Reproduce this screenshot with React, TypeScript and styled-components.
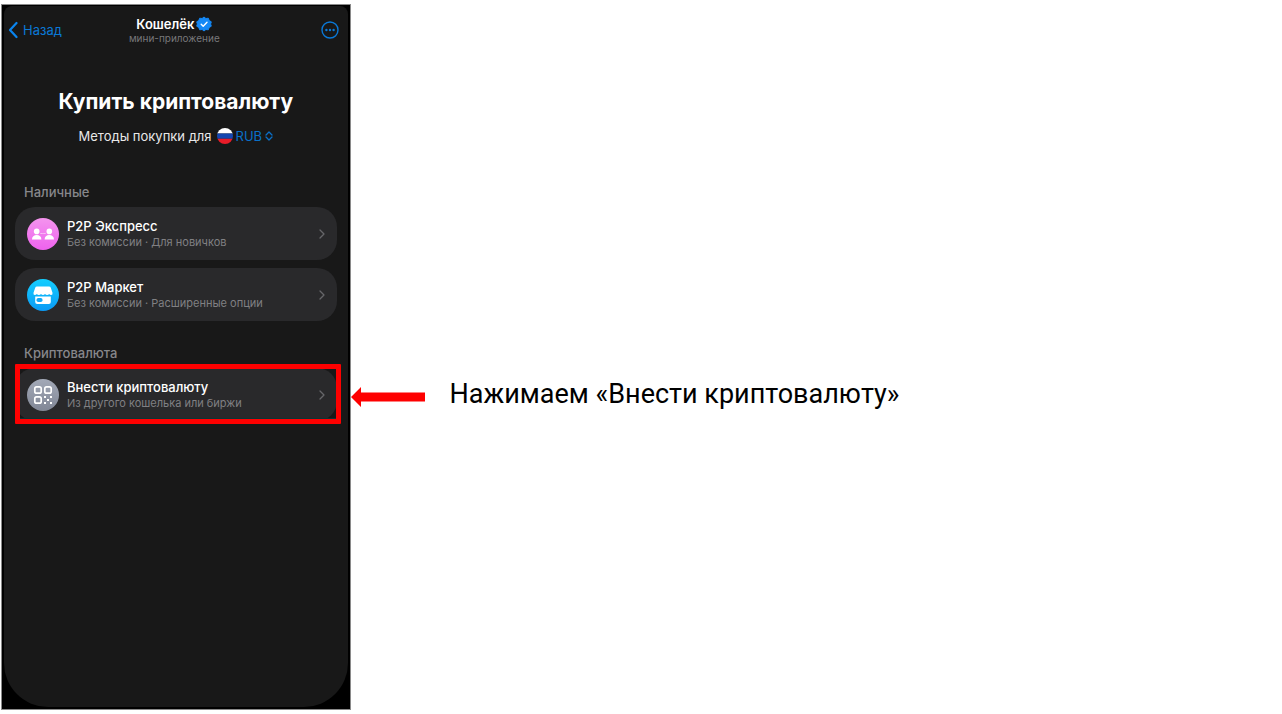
import React from 'react';
import styled, { createGlobalStyle } from 'styled-components';

const GlobalStyle = createGlobalStyle`
  *, *::before, *::after { box-sizing: border-box; }
  body { margin: 0; background: #fff; font-family: Inter, "Liberation Sans", sans-serif; }
  h1, h2, p { margin: 0; }
  button { font: inherit; border: 0; background: none; padding: 0; cursor: pointer; }
  svg { display: block; flex: none; }
`;

const Page = styled.main`
  display: flex;
  align-items: flex-start;
  gap: 1px;
  padding: 5px 2px;
`;

const Phone = styled.section`
  display: flex;
  flex: 0 0 27.2%;
  min-width: 340px;
  min-height: calc(100vh - 10px);
  padding: 1px 2px 2px;
  background: #000;
  outline: 1px solid #8a8a8a;
`;

const Screen = styled.div`
  flex: 1;
  padding: 0 11px;
  background: #181818;
  border-radius: 8px 8px 44px 44px;
`;

const Header = styled.header`
  display: grid;
  grid-template-columns: 1fr auto 1fr;
  align-items: center;
  height: 48px;
  margin: 0 -4px 0 -7px;
`;

const BackButton = styled.button`
  display: flex;
  align-items: center;
  gap: 5px;
  justify-self: start;
  color: #0a78d6;
  font-size: 13px;
  line-height: 16px;
`;

const MoreButton = styled.button`
  justify-self: end;
  margin-right: 2px;
  color: #0a78d6;
`;

const AppTitle = styled.div`
  text-align: center;
`;

const AppName = styled.p`
  display: flex;
  align-items: center;
  justify-content: center;
  gap: 2px;
  color: #fff;
  font-size: 13px;
  font-weight: 600;
  line-height: 16px;
`;

const AppKind = styled.p`
  color: #77777a;
  font-size: 10px;
  line-height: 12px;
`;

const Title = styled.h1`
  margin-top: 33px;
  color: #fff;
  font-size: 21px;
  font-weight: 700;
  line-height: 30px;
  text-align: center;
  white-space: nowrap;
`;

const Methods = styled.div`
  display: flex;
  align-items: center;
  justify-content: center;
  gap: 5px;
  margin-top: 11px;
  color: #e8e8e8;
  font-size: 13px;
  line-height: 16px;
`;

const CurrencyButton = styled.button`
  display: flex;
  align-items: center;
  gap: 3px;
  color: #0a70c8;
  line-height: 16px;
`;

const Group = styled.section<{ $first?: boolean }>`
  display: flex;
  flex-direction: column;
  gap: 8px;
  margin-top: ${(p) => (p.$first ? 40 : 24)}px;
`;

const GroupTitle = styled.h2`
  margin-bottom: -1px;
  padding-left: 9px;
  color: #87878b;
  font-size: 13px;
  font-weight: 500;
  line-height: 16px;
`;

const Row = styled.button<{ $marked?: boolean }>`
  position: relative;
  display: flex;
  align-items: center;
  gap: 8px;
  width: 100%;
  height: 53px;
  padding: 0 11px 0 12px;
  border-radius: 20px;
  background: #29292b;
  text-align: left;

  &::after {
    content: "";
    display: ${(p) => (p.$marked ? 'block' : 'none')};
    position: absolute;
    inset: -4px -4px -3px 0;
    border: 5px solid #fe0000;
    border-radius: 1px;
    box-shadow: inset 0 -1px #0b3436;
  }
`;

const RowText = styled.span`
  display: flex;
  flex: 1;
  flex-direction: column;
`;

const RowTitle = styled.span`
  color: #fff;
  font-size: 13px;
  font-weight: 500;
  line-height: 18px;
`;

const RowNote = styled.span`
  color: #808083;
  font-size: 11px;
  line-height: 15px;
`;

const Step = styled.div`
  display: flex;
  align-items: center;
  gap: 25px;
  margin-top: 371px;
`;

const StepText = styled.p`
  padding-bottom: 6px;
  color: #000;
  font-family: Roboto, "Liberation Sans", sans-serif;
  font-size: 27px;
  line-height: 36px;
`;

const Chevron = () => (
  <svg width="8" height="12" viewBox="0 0 8 12" fill="none" stroke="#66666a" strokeWidth="1.3" strokeLinecap="round" strokeLinejoin="round" aria-hidden="true">
    <path d="M2 2l4 4-4 4" />
  </svg>
);

const Verified = () => (
  <svg width="16" height="16" viewBox="0 0 16 16" aria-hidden="true">
    <path
      fill="#1488f5"
      stroke="#1488f5"
      strokeWidth="1"
      strokeLinejoin="round"
      d="M8 1l1.900 1.500 2.400-.3.9 2.300 2.100 1.300L14.600 8l.7 2.200-2.100 1.300-.9 2.300-2.400-.3L8 15l-1.900-1.500-2.400.3-.9-2.300L.7 10.200 1.400 8 .7 5.800l2.100-1.300.9-2.300 2.400.3z"
    />
    <path d="M5.200 8.200l2 2L11 6.300" fill="none" stroke="#fff" strokeWidth="1.4" strokeLinecap="round" strokeLinejoin="round" />
  </svg>
);

const Flag = () => (
  <svg width="16" height="16" viewBox="0 0 16 16" aria-hidden="true">
    <clipPath id="flag-round"><circle cx="8" cy="8" r="8" /></clipPath>
    <g clipPath="url(#flag-round)">
      <path fill="#fff" d="M0 0h16v5.500H0z" />
      <path fill="#1546b0" d="M0 5.500h16v5.200H0z" />
      <path fill="#e81c28" d="M0 10.700h16V16H0z" />
    </g>
  </svg>
);

const ExpressIcon = () => (
  <svg width="32" height="32" viewBox="0 0 32 32" aria-hidden="true">
    <defs>
      <linearGradient id="pink" x2="0" y2="1"><stop stopColor="#f494ee" /><stop offset="1" stopColor="#ee62ee" /></linearGradient>
    </defs>
    <circle cx="16" cy="16" r="16" fill="url(#pink)" />
    <g fill="#fff">
      <circle cx="9.7" cy="13.4" r="2.8" />
      <path d="M5 21.500c0-2.800 1.900-4.400 4.700-4.400s4.700 1.600 4.700 4.400z" />
      <circle cx="22.3" cy="13.4" r="2.8" />
      <path d="M17.600 21.500c0-2.800 1.900-4.400 4.700-4.400s4.700 1.600 4.700 4.400z" />
    </g>
    <path d="M13.500 15.500h5" stroke="#fff" strokeWidth="1.2" strokeDasharray="1.2 .7" opacity=".7" />
  </svg>
);

const MarketIcon = () => (
  <svg width="32" height="32" viewBox="0 0 32 32" aria-hidden="true">
    <defs>
      <linearGradient id="cyan" x2="0" y2="1"><stop stopColor="#14ceff" /><stop offset="1" stopColor="#0a9af5" /></linearGradient>
    </defs>
    <circle cx="16" cy="16" r="16" fill="url(#cyan)" />
    <path fill="#fff" d="M10 7.500h12q1.400 0 1.800 1.200l1.700 5q.4 2.300-1.300 2.300-1.400 0-2-1-.8 1-2.100 1t-2.100-1q-.8 1-2 1t-2-1q-.8 1-2.100 1t-2.100-1q-.6 1-2 1-1.700 0-1.300-2.300l1.700-5q.4-1.200 1.800-1.200z" />
    <path fill="#fff" d="M8.200 17.500h15.600v5.500q0 2-2 2H10.200q-2 0-2-2z" />
    <rect x="9.500" y="19" width="6" height="4" rx="1.8" fill="#12a9f6" />
  </svg>
);

const QrIcon = () => (
  <svg width="32" height="32" viewBox="0 0 32 32" aria-hidden="true">
    <defs>
      <linearGradient id="grey" x2="0" y2="1"><stop stopColor="#a3a9b7" /><stop offset="1" stopColor="#818796" /></linearGradient>
    </defs>
    <circle cx="16" cy="16" r="16" fill="url(#grey)" />
    <g fill="none" stroke="#fff" strokeWidth="1.7">
      <rect x="7.800" y="7.800" width="6.400" height="6.400" rx="1.8" />
      <rect x="17.800" y="7.800" width="6.400" height="6.400" rx="1.8" />
      <rect x="7.800" y="17.800" width="6.400" height="6.400" rx="1.8" />
    </g>
    <path fill="#fff" d="M17 17h2v2h-2zM23 17h2v2h-2zM20 20h2v2h-2zM17 23h2v2h-2zM23 23h2v2h-2z" />
  </svg>
);

type MethodProps = { icon: React.ReactNode; title: string; note: string; marked?: boolean };

const Method = ({ icon, title, note, marked }: MethodProps) => (
  <Row type="button" $marked={marked}>
    {icon}
    <RowText>
      <RowTitle>{title}</RowTitle>
      <RowNote>{note}</RowNote>
    </RowText>
    <Chevron />
  </Row>
);

export default function App() {
  return (
    <>
      <GlobalStyle />
      <Page>
        <Phone>
          <Screen>
            <Header>
              <BackButton type="button">
                <svg width="10" height="18" viewBox="0 0 10 18" fill="none" stroke="#0a84ee" strokeWidth="2.2" strokeLinecap="round" strokeLinejoin="round" aria-hidden="true">
                  <path d="M8.500 2L2 9l6.500 7" />
                </svg>
                Назад
              </BackButton>
              <AppTitle>
                <AppName>Кошелёк<Verified /></AppName>
                <AppKind>мини-приложение</AppKind>
              </AppTitle>
              <MoreButton type="button" aria-label="Ещё">
                <svg width="18" height="18" viewBox="0 0 18 18" aria-hidden="true">
                  <circle cx="9" cy="9" r="8" fill="none" stroke="currentColor" strokeWidth="1.4" />
                  <g fill="currentColor">
                    <circle cx="5.400" cy="9" r="1.2" />
                    <circle cx="9" cy="9" r="1.2" />
                    <circle cx="12.600" cy="9" r="1.2" />
                  </g>
                </svg>
              </MoreButton>
            </Header>
            <Title>Купить криптовалюту</Title>
            <Methods>
              Методы покупки для
              <CurrencyButton type="button">
                <Flag />
                RUB
                <svg width="8" height="10" viewBox="0 0 8 10" fill="none" stroke="currentColor" strokeWidth="1.3" strokeLinecap="round" strokeLinejoin="round" aria-hidden="true">
                  <path d="M1 4l3-3 3 3M1 6l3 3 3-3" />
                </svg>
              </CurrencyButton>
            </Methods>
            <Group $first>
              <GroupTitle>Наличные</GroupTitle>
              <Method icon={<ExpressIcon />} title="P2P Экспресс" note="Без комиссии · Для новичков" />
              <Method icon={<MarketIcon />} title="P2P Маркет" note="Без комиссии · Расширенные опции" />
            </Group>
            <Group>
              <GroupTitle>Криптовалюта</GroupTitle>
              <Method icon={<QrIcon />} title="Внести криптовалюту" note="Из другого кошелька или биржи" marked />
            </Group>
          </Screen>
        </Phone>
        <Step>
          <svg width="74" height="20" viewBox="0 0 74 20" aria-hidden="true">
            <path fill="#fe0000" d="M0 10L10 0v5.500h64v9H10V20z" />
          </svg>
          <StepText>Нажимаем «Внести криптовалюту»</StepText>
        </Step>
      </Page>
    </>
  );
}
